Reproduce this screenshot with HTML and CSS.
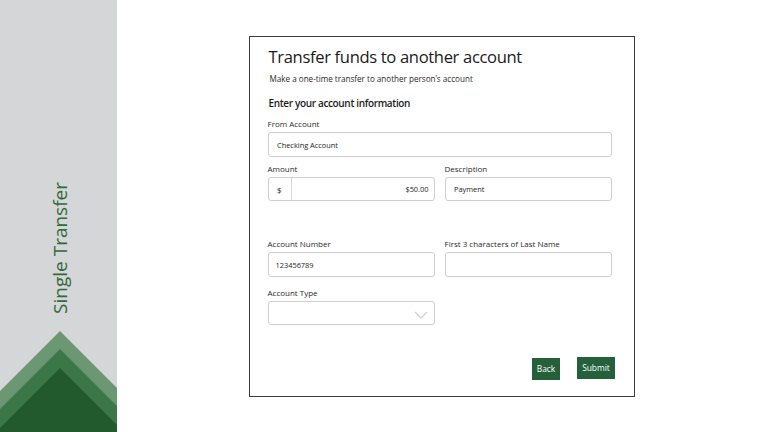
FILE: index.html
```html
<!DOCTYPE html>
<html lang="en">
<head>
<meta charset="utf-8">
<title>Single Transfer</title>
<link rel="stylesheet" href="styles.css">
</head>
<body>
<div class="page">
  <aside class="sidebar">
    <div class="side-title">Single Transfer</div>
    <svg class="chevrons" viewBox="0 0 117 102" width="117" height="102" aria-hidden="true">
      <polygon points="60,1 117,58 117,102 0,102 0,61" fill="#6b9872"/>
      <polygon points="60,19 117,76 117,102 0,102 0,79" fill="#3c7748"/>
      <polygon points="60,38 117,95 117,102 0,102 0,98" fill="#22592d"/>
    </svg>
  </aside>
  <main class="main">
    <section class="panel">
      <h1 class="title">Transfer funds to another account</h1>
      <p class="subtitle">Make a one-time transfer to another person’s account</p>
      <h2 class="section-head">Enter your account information</h2>

      <div class="row row-from">
        <div class="field field-full">
          <div class="label">From Account</div>
          <div class="input input-tall">Checking Account</div>
        </div>
      </div>

      <div class="row row-amount">
        <div class="field">
          <div class="label">Amount</div>
          <div class="input group">
            <span class="prefix">$</span>
            <span class="amount">$50.00</span>
          </div>
        </div>
        <div class="field">
          <div class="label">Description</div>
          <div class="input">Payment</div>
        </div>
      </div>

      <div class="row row-account">
        <div class="field">
          <div class="label">Account Number</div>
          <div class="input input-tall num">123456789</div>
        </div>
        <div class="field">
          <div class="label">First 3 characters of Last Name</div>
          <div class="input input-tall"></div>
        </div>
      </div>

      <div class="row row-type">
        <div class="field">
          <div class="label">Account Type</div>
          <div class="input select">
            <svg class="caret" viewBox="0 0 14 8" width="14" height="8" aria-hidden="true">
              <polyline points="1,1 7,7 13,1" fill="none" stroke="#d2d2d2" stroke-width="1.3"/>
            </svg>
          </div>
        </div>
      </div>

      <div class="actions">
        <button class="btn btn-back" type="button">Back</button>
        <button class="btn btn-submit" type="button">Submit</button>
      </div>
    </section>
  </main>
</div>
</body>
</html>
```

FILE: styles.css
```css
* { box-sizing: border-box; }

html, body {
  margin: 0;
  padding: 0;
  background: #ffffff;
}

body {
  font-family: "Open Sans", "Noto Sans", "Liberation Sans", sans-serif;
  color: #222222;
  width: 768px;
  height: 432px;
  overflow: hidden;
}

.page {
  display: flex;
  width: 768px;
  height: 432px;
}

/* Sidebar */
.sidebar {
  width: 117px;
  flex: 0 0 117px;
  background: #d5d6d8;
  display: flex;
  flex-direction: column;
  align-items: center;
  justify-content: flex-end;
}

.side-title {
  writing-mode: vertical-rl;
  transform: rotate(180deg);
  font-size: 19px;
  line-height: 22px;
  color: #2f6b3c;
  margin-bottom: 16px;
  margin-left: 2px;
}

.chevrons {
  display: block;
  flex: 0 0 auto;
}

/* Main */
.main {
  flex: 1;
  padding: 36px 0 0 132px;
}

.panel {
  width: 386px;
  height: 361px;
  border: 1.5px solid #3a3a3a;
  padding: 8px 21px 0 17.5px;
}

.title {
  margin: 0 0 0 1px;
  font-size: 16.6px;
  line-height: 24px;
  font-weight: 400;
  letter-spacing: -0.35px;
  color: #1a1a1a;
}

.subtitle {
  margin: 4px 0 0 2px;
  font-size: 8.1px;
  line-height: 12px;
  color: #2a2a2a;
}

.section-head {
  margin: 11px 0 0 1px;
  font-size: 10px;
  line-height: 14px;
  font-weight: 600;
  letter-spacing: -0.35px;
  color: #1c1c1c;
}

.row {
  display: flex;
  gap: 10px;
}

.row-from { margin-top: 8px; }
.row-amount { margin-top: 6px; }
.row-account { margin-top: 37px; }
.row-type { margin-top: 10px; }

.field {
  width: 167px;
  display: flex;
  flex-direction: column;
}

.field-full { width: 344px; }

.label {
  font-size: 8px;
  line-height: 12px;
  color: #2a2a2a;
  margin-bottom: 2px;
}

.input {
  height: 24px;
  border: 1.3px solid #cfcfcf;
  border-radius: 3px;
  font-size: 7.4px;
  color: #1c1c1c;
  display: flex;
  align-items: center;
  padding: 0 8px;
  margin-left: 0.5px;
}

.input-tall { height: 25px; }

.num { padding-left: 6.5px; }

.group { padding: 0; }

.prefix {
  width: 23px;
  height: 100%;
  border-right: 1.3px solid #d6d6d6;
  display: flex;
  align-items: center;
  padding-left: 8px;
  font-size: 8px;
}

.amount {
  flex: 1;
  text-align: right;
  padding-right: 5px;
}

.select {
  justify-content: flex-end;
  padding-right: 6px;
}

.caret { display: block; margin-top: 3px; }

.actions {
  display: flex;
  justify-content: flex-end;
  gap: 17px;
  margin-top: 32px;
  margin-right: -2px;
}

.btn {
  font-family: inherit;
  font-size: 8.4px;
  color: #ffffff;
  background: #24603a;
  border: 0;
  border-radius: 0;
  height: 22px;
  padding: 0;
  line-height: 22px;
  cursor: pointer;
}

.btn-back { width: 28px; margin-top: 1px; }
.btn-submit { width: 38px; }
```
